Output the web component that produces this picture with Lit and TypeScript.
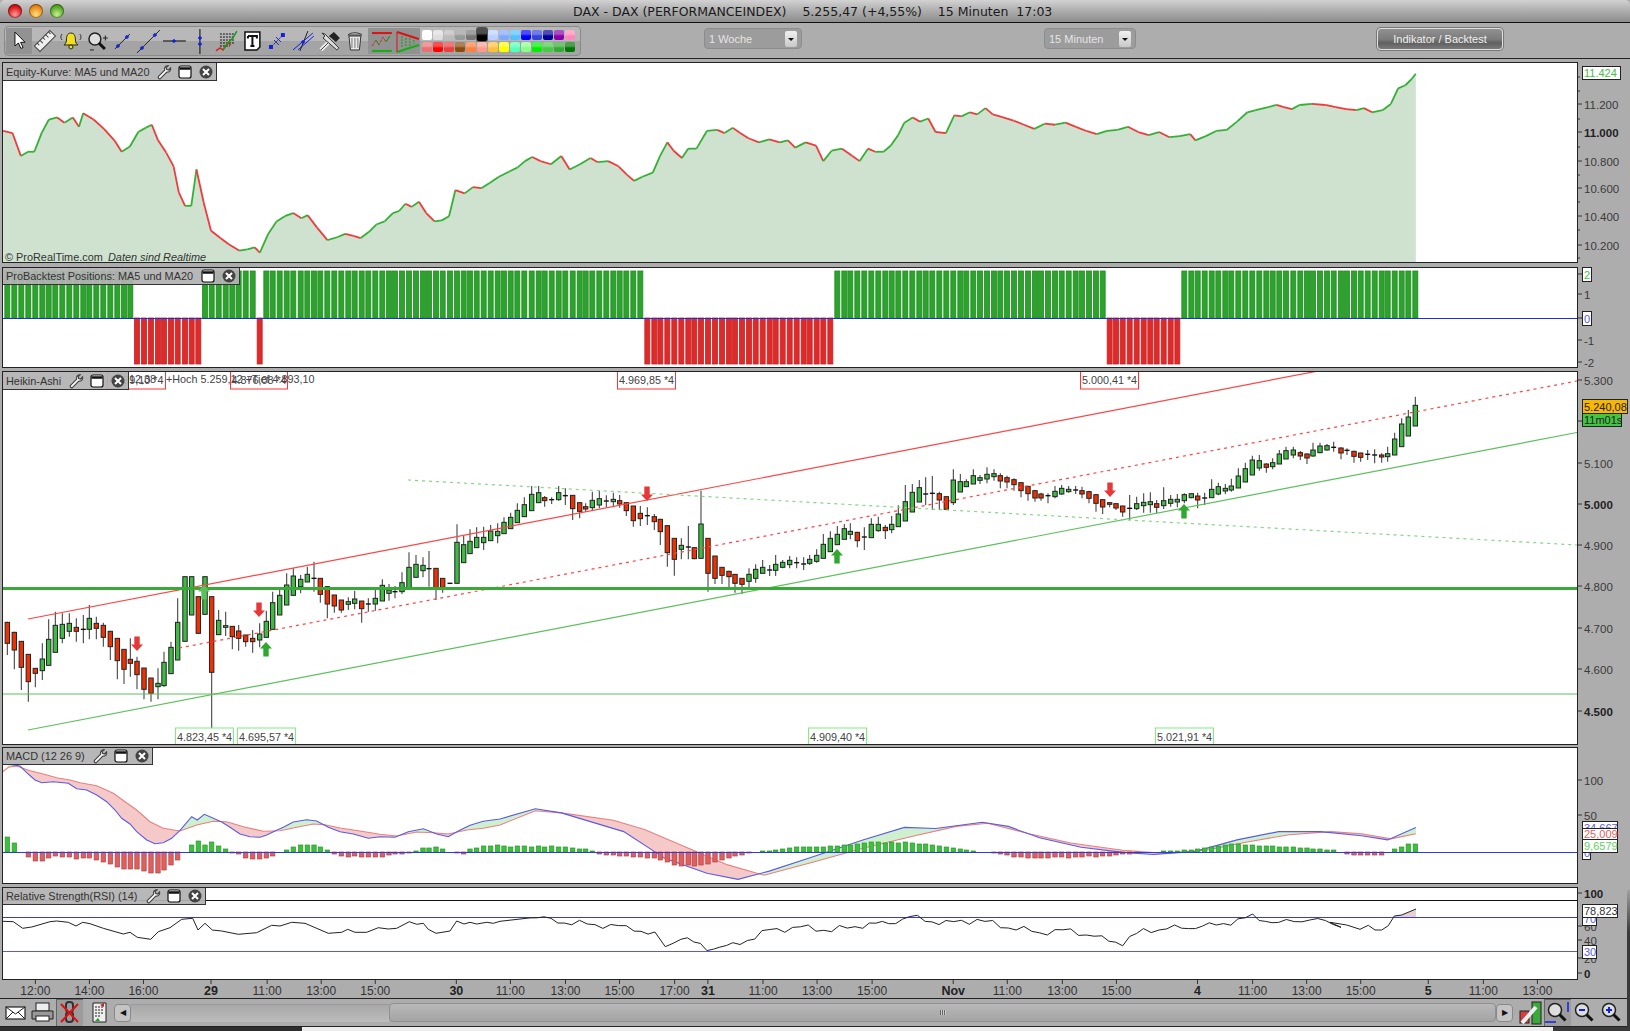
import { LitElement, html, svg, css } from 'lit';
import { customElement } from 'lit/decorators.js';

// the screenshot data was read at two scales, S turns overview coords into page px
const S = 1.0395;
const pts = (s: string) => s.trim().split(/\s+/).map((p) => p.split(',').map(Number));
const zoomed = (ox: number, oy: number, s: string) => pts(s).map(([x, y]) => [ox + x / 3, oy + y / 3]);
const viewed = (s: string) => pts(s).map(([x, y]) => [x * S, y * S]);
const poly = (p: number[][]) => p.map(([x, y]) => `${x.toFixed(1)},${y.toFixed(1)}`).join(' ');

const EQUITY = viewed(`3,126 12,128 20,150 27,146 33,146 40,128 47,115 55,113 62,118 70,113 76,122 80,109 90,115 100,124 110,135 117,146 125,141 133,127 140,123 146,120 152,135 160,147 167,160 172,185 178,198 184,198 189,163 196,195 203,222 212,229 220,235 230,241 238,240 245,238 250,243 258,225 266,213 274,208 282,205 290,210 296,207 305,219 315,231 325,228 332,225 340,227 347,229 355,223 362,216 370,213 378,205 384,203 390,196 396,199 403,194 410,205 418,213 425,212 432,208 438,183 447,186 455,180 463,181 471,176 480,170 490,165 498,161 505,155 512,151 520,155 530,158 540,150 548,163 558,158 568,152 575,156 585,155 595,160 603,168 610,174 618,170 628,166 635,150 642,137 648,145 656,152 662,143 670,143 680,126 690,125 697,128 705,123 712,128 720,133 730,137 740,134 750,137 758,135 765,142 775,137 785,140 792,155 800,145 810,143 820,150 827,155 835,143 842,146 850,146 857,140 864,130 870,118 878,113 885,117 893,114 900,127 910,128 918,111 925,112 933,108 940,110 948,104 955,110 965,113 975,116 985,120 995,124 1005,119 1015,120 1025,118 1035,122 1045,126 1055,129 1065,126 1075,125 1085,122 1095,127 1105,130 1115,127 1125,132 1135,131 1145,129 1150,135 1160,131 1170,126 1180,125 1190,117 1200,108 1208,106 1220,103 1228,101 1235,103 1243,105 1250,101 1262,100 1275,101 1285,103 1295,105 1305,106 1312,104 1320,108 1330,106 1338,100 1345,85 1352,82 1358,76 1362,71`);

// x, wick top, body top, body bottom, wick bottom, colour (in zoom crop coords)
const parseCandles = (ox: number, oy: number, s: string) =>
  s.trim().split(',').map((row) => {
    const c = row.trim().split(/\s+/);
    const [x, wt, bt, bb, wb] = c.slice(0, 5).map(Number);
    return { x: ox + x / 3, wt: oy + wt / 3, bt: oy + bt / 3, bb: oy + bb / 3, wb: oy + wb / 3, c: c[5] };
  });

const CANDLES = [
  ...parseCandles(0, 560, `22 185 187 250 285 r,43 215 217 270 328 r,64 243 244 322 390 r,85 283 283 365 425 r,106 325 325 340 382 r,127 250 297 332 360 g,146 178 238 316 316 g,166 155 196 277 277 g,187 160 193 235 250 g,208 160 190 214 230 g,229 175 202 214 245 r,250 165 208 208 250 d,268 135 175 208 238 g,289 170 190 205 238 r,310 188 196 232 260 r,331 212 214 260 300 r,352 235 235 302 358 r,372 268 268 328 372 r,391 235 298 310 350 r,411 290 304 344 388 r,432 324 324 388 418 r,453 354 354 400 425 r,474 325 370 380 418 g,492 275 307 377 380 g,513 245 262 341 341 g,533 115 187 300 300 g,555 50 50 244 244 g,575 50 50 165 165 g,595 110 110 220 220 r,615 50 50 163 163 g,635 110 110 337 505 r,656 150 181 224 224 g,677 155 197 202 228 g,697 198 199 230 268 r,716 195 213 235 272 r,737 225 225 245 260 r,758 210 235 245 278 r,779 190 222 240 262 g,799 152 184 232 232 g,818 95 128 208 208 g,839 90 106 165 165 g,860 40 75 135 135 g,880 25 48 106 106 g,902 45 58 80 100 g,922 20 43 66 66 g,942 5 55 55 95 d,961 55 55 103 128 r,982 78 80 132 175 r,1003 105 105 138 158 r,1024 120 120 150 158 r,1045 112 125 133 150 g,1064 92 117 130 148 g,1085 123 123 146 188 r,1105 115 132 132 155 d,1126 90 115 132 152 g,1147 58 76 123 123 g,1167 72 90 100 122 g,1185 78 95 95 115 d`),
  ...parseCandles(390, 470, `36 307 338 365 372 g,57 247 292 355 355 g,78 255 283 322 322 g,99 262 286 302 322 g,117 243 296 296 350 d,138 295 295 355 390 r,158 325 325 352 368 r,180 340 340 340 340 d,201 163 217 340 340 g,221 197 224 278 278 g,240 178 214 251 251 g,260 172 202 233 233 g,281 170 202 218 240 g,302 165 183 212 212 g,323 160 184 197 220 g,342 142 157 191 191 g,362 128 142 176 176 g,382 100 121 158 158 g,403 82 104 140 140 g,425 48 73 122 122 g,446 48 68 98 98 g,464 78 83 92 110 r,485 82 89 89 102 d,506 48 68 89 92 g,526 55 77 77 105 d,548 76 76 116 150 r,569 98 98 124 145 r,587 100 110 117 125 r,607 65 91 113 122 g,628 62 86 105 115 g,649 76 93 93 112 d,670 68 88 95 112 g,689 75 92 102 113 r,709 98 98 122 138 r`),
  ...parseCandles(620, 470, `40 108 108 152 170 r,61 108 130 146 168 r,82 112 137 137 165 d,103 132 140 155 180 r,121 146 148 185 225 r,142 165 167 248 290 r,163 205 205 268 317 r,184 205 226 238 268 g,205 168 231 231 268 d,223 232 233 266 268 r,243 62 162 265 265 g,264 205 205 310 365 r,285 258 258 325 342 r,306 292 292 316 342 r,327 302 304 320 360 r,345 312 313 340 368 r,366 325 325 343 372 r,387 295 313 334 360 g,407 283 298 325 338 g,428 270 292 310 310 g,449 285 300 300 318 d,467 255 283 301 318 g,488 270 277 292 295 g,509 258 271 284 295 g,530 262 278 278 295 d,551 262 282 282 300 d,569 255 268 280 285 g,590 238 256 274 278 g,610 192 223 265 265 g,631 184 205 245 245 g,652 168 193 224 224 g,673 162 176 208 208 g,691 160 184 193 208 g,712 185 187 212 232 r,733 172 201 201 240 d,754 145 163 203 203 g,775 140 163 182 185 g,796 165 172 182 207 r,815 138 163 179 190 g,835 106 132 170 170 g`),
  ...parseCandles(900, 450, `16 105 155 213 213 g,37 102 127 186 186 g,58 90 113 156 156 g,77 82 132 132 165 d,97 78 130 130 180 d,118 125 131 150 180 r,139 140 140 178 180 r,160 58 90 158 165 g,181 72 95 126 126 g,199 88 95 110 110 g,220 58 77 102 102 g,240 75 83 91 102 g,261 52 73 87 100 g,282 58 71 80 92 g,301 70 77 93 115 r,321 77 83 96 115 r,342 85 89 104 122 r,363 98 98 122 142 r,384 108 109 131 152 r,405 120 122 144 155 r,423 128 132 144 152 r,444 130 137 137 160 d,465 108 124 140 145 g,485 105 115 132 135 g,506 108 118 125 128 g,527 108 120 120 132 d,546 110 122 132 145 r,567 122 125 145 160 r,588 133 134 160 185 r,608 148 149 171 192 r,629 157 158 163 172 r,648 160 161 174 180 r,668 167 168 186 200 r,689 135 175 175 210 d,710 140 161 176 180 g,731 130 157 167 188 g,751 127 155 164 188 g,770 150 161 172 190 r`),
  ...parseCandles(1160, 390, `11 292 332 347 357 g,32 315 328 340 350 g,52 312 328 336 352 g,73 310 314 332 340 g,94 311 311 323 325 g,113 308 318 330 355 r,134 308 324 324 345 d,155 268 298 323 323 g,175 278 290 312 316 g,196 282 295 303 312 g,214 266 288 300 305 g,235 235 258 294 294 g,256 218 236 276 276 g,277 197 210 255 255 g,298 195 212 234 242 g,319 220 222 232 248 r,338 205 218 230 238 g,358 180 192 222 222 g,378 170 182 207 207 g,400 170 180 195 205 g,421 183 188 198 210 r,441 190 192 204 222 r,459 158 180 198 200 g,480 158 168 188 190 g,501 162 167 180 182 g,521 155 172 172 185 d,543 172 174 189 208 r,561 175 181 181 195 d,582 182 184 199 218 r,602 188 189 202 215 r,623 180 193 193 210 d,644 178 195 195 220 d,665 190 195 201 218 r,683 170 191 200 215 g,704 128 147 195 195 g,725 85 102 170 170 g,745 60 81 138 138 g,766 20 46 108 108 g`),
];

const MACD_BLUE = [
  ...zoomed(0, 750, `8,40 60,48 80,68 105,90 125,98 160,95 205,100 230,116 260,120 290,135 320,155 345,180 365,205 390,222 410,245 440,270 465,281 490,278 515,265 540,241 575,200 592,210 613,193 640,205 665,216 690,232 720,252 750,260 780,262 800,255 825,243 850,232 880,216 920,209 950,213 985,232 1020,245 1060,252 1105,265 1140,260 1185,262 1225,245 1270,236 1310,252 1345,260 1375,243 1410,226 1450,214 1500,207`),
  ...viewed(`515,778 540,782 600,800 640,826 680,840 710,846 740,838 780,825 830,808 870,796 900,797 945,791 970,795 1000,806 1040,815 1080,820 1110,822 1150,819 1190,808 1230,800 1270,800 1310,804 1335,808 1362,796`),
];
const MACD_RED = [
  ...zoomed(0, 750, `8,65 25,52 50,48 90,62 130,72 170,83 210,90 240,98 290,107 340,130 375,155 410,180 450,215 490,235 540,243 590,225 640,214 680,215 730,230 790,244 840,242 890,232 940,222 975,224 1020,234 1080,243 1140,253 1190,258 1250,246 1300,248 1345,252 1400,240 1450,235 1500,225`),
  ...viewed(`515,780 540,782 590,789 620,798 660,815 700,832 735,842 780,830 830,816 880,804 920,795 950,792 990,802 1030,811 1080,818 1120,821 1160,818 1200,810 1240,803 1280,800 1310,802 1338,807 1362,802`),
];
const HIST = [15, 9, 0, -5, -9, -9, -6, -4, -5, -5, -7, -6, -6, -8, -10, -12, -15, -17, -17, -19, -21, -21, -18, -13, -8, 0, 7, 11, 7, 10, 6, 3, -1, -2, -6, -7, -7, -6, -4, 0, 2, 5, 7, 7, 7, 5, 2, -2, -4, -5, -4, -5, -5, -5, -3, -2, -2, -1, 1, 4, 4, 5, 3, 0, -1, -2, 3, 4, 6, 6, 7, 6, 5, 6, 6,
  5, 6, 5, 6, 5, 5, 4, 3, 1, -2, -3, -3, -4, -4, -5, -5, -6, -6, -8, -10, -13, -14, -13, -14, -13, -12, -10, -8, -6, -4, -3, -1, 0, 1, 1, 2, 3, 4, 5, 5, 5, 5, 6, 6, 7, 7, 8, 9, 10, 10, 9, 10, 9, 10, 9, 8, 8, 7, 6, 5, 4, 3, 2, 1, 0, 0, -1, -2, -3, -5, -5, -6, -6, -6, -5, -5, -6, -5, -5, -4, -5, -4, -4, -3, -2, -2, -1, 0, 0, 0, 1, 1, 1, 2, 2, 3, 4, 5, 6, 7, 8, 8, 7, 7, 6, 6, 5, 5, 5, 4, 4, 3, 3, 2, 2, 0, -2, -3, -3, -3, -3, -3, 0, 3, 5, 8];
const histAt = (x: number) => HIST[Math.min(HIST.length - 1, Math.round((x - 7.6) / 7.01))];

// the middle of the rsi line was only read roughly, give it the small ripple of the original
const ripple = (p: number[][]) => p.map(([x, y]) => [x, y + 2.2 * Math.sin(x * 0.17) + 1.4 * Math.sin(x * 0.41)]);
const densify = (p: number[][], step: number) => {
  const out: number[][] = [];
  for (let i = 1; i < p.length; i++) {
    const n = Math.max(1, Math.round((p[i][0] - p[i - 1][0]) / step));
    for (let k = 0; k < n; k++) {
      const t = k / n;
      out.push([p[i - 1][0] + t * (p[i][0] - p[i - 1][0]), p[i - 1][1] + t * (p[i][1] - p[i - 1][1])]);
    }
  }
  out.push(p[p.length - 1]);
  return out;
};

const RSI = [
  ...zoomed(0, 880, `8,124 40,125 68,145 95,141 150,125 170,123 205,127 228,138 248,127 270,131 310,145 370,162 390,157 412,172 452,178 475,155 510,143 545,118 578,115 594,150 615,130 637,150 665,153 715,163 770,158 815,136 840,138 875,127 915,130 985,160 1025,157 1043,148 1065,157 1100,157 1135,143 1165,147 1190,145 1228,125 1250,133 1270,130 1285,148 1308,160 1350,153 1370,123 1392,132 1410,127 1430,132 1460,127 1480,130 1500,124`),
  ...ripple(densify(viewed(`510,882 530,885 550,888 580,890 610,893 630,900 640,910 655,902 680,912 705,910 740,895 770,892 800,895 830,890 855,888 875,882 890,885 910,888 940,885 970,892 1000,897 1030,895 1060,903 1080,907 1100,895 1130,893 1170,890 1205,882 1230,888 1260,884 1290,890`), 7)),
  ...zoomed(1330, 780, `0,427 50,435 90,448 115,436 135,450 155,450 175,437 193,408 215,405 258,387`),
];

const TIMES: [number, string, boolean][] = [
  [34, '12:00', false], [86, '14:00', false], [138, '16:00', false], [203, '29', true], [257, '11:00', false], [309, '13:00', false], [361, '15:00', false], [439, '30', true], [491, '11:00', false], [544, '13:00', false], [596, '15:00', false], [649, '17:00', false], [681, '31', true], [734, '11:00', false], [786, '13:00', false], [839, '15:00', false], [917, 'Nov', true], [969, '11:00', false], [1022, '13:00', false], [1074, '15:00', false], [1152, '4', true], [1205, '11:00', false], [1257, '13:00', false], [1309, '15:00', false], [1374, '5', true], [1427, '11:00', false], [1479, '13:00', false],
];

const PALETTE = ['#ffffff', '#dddddd', '#bbbbbb', '#999999', '#777777', '#000000', '#bcd0ff', '#7fa8ff', '#55c0ff', '#0000ff', '#3344dd', '#000099', '#8800aa', '#ff88bb',
  '#e87070', '#ff0000', '#e84040', '#8b4a10', '#ff8040', '#ff9a8a', '#ffc040', '#ffff00', '#55ffbb', '#88ff88', '#00ee00', '#44cc44', '#33aa33', '#007700'];

const interp = (p: number[][], x: number) => {
  for (let i = 1; i < p.length; i++) {
    if (x <= p[i][0]) {
      const t = (x - p[i - 1][0]) / (p[i][0] - p[i - 1][0]);
      return p[i - 1][1] + t * (p[i][1] - p[i - 1][1]);
    }
  }
  return p[p.length - 1][1];
};

const blueCross = (x: number, y: number) => svg`<path d="M${x - 2} ${y}h4M${x} ${y - 2}v4" stroke="#1020e0" stroke-width="1.4"/>`;

const TOOL_ICONS = [
  svg`<path d="M9 4v14l3.5-3 2.5 5.5 2.2-1-2.5-5.2h4.5z" fill="#fff" stroke="#111"/>`,
  svg`<g transform="rotate(-45 13 13)"><rect x="2" y="9" width="22" height="8" fill="#eee" stroke="#444"/><path d="M6 9v3M10 9v4M14 9v3M18 9v4M22 9v3" stroke="#444"/></g>`,
  svg`<path d="M13 5c-4 0-4.500 4-4.500 7 0 3-1.500 4-2.500 5h14c-1-1-2.500-2-2.500-5 0-3-.5-7-4.500-7z" fill="#f2e020" stroke="#222"/><circle cx="13" cy="19" r="2" fill="#f2e020" stroke="#222"/><path d="M4 6c-1.500 2-1.500 4 0 6M22 6c1.500 2 1.500 4 0 6" fill="none" stroke="#333"/>`,
  svg`<circle cx="11" cy="11" r="6" fill="#ddd" stroke="#222" stroke-width="1.500"/><path d="M15 15l6 6" stroke="#111" stroke-width="3"/><path d="M19 10h5M21.500 7.500v5M6 22h4" stroke="#222"/>`,
  svg`<path d="M6 21L21 6" stroke="#222"/>${blueCross(9, 18)}${blueCross(18, 9)}`,
  svg`<path d="M2 25L25 2" stroke="#222"/>${blueCross(7, 20)}${blueCross(20, 7)}`,
  svg`<path d="M2 13h23" stroke="#222" stroke-width="1.200"/>${blueCross(13, 13)}`,
  svg`<path d="M13 1v25" stroke="#222" stroke-width="1.200"/>${blueCross(13, 10)}${blueCross(13, 16)}`,
  svg`<path d="M7 6h14M7 9h14M7 12h14M7 15h14M7 18h10" stroke="#111" stroke-dasharray="2 1"/><path d="M3 23l4-3 3 2 5-7 3 2" fill="none" stroke="#e02020" stroke-width="1.500"/><path d="M10 22l4-6 6-6 4-7" fill="none" stroke="#10a010" stroke-width="1.500"/>`,
  svg`<path d="M6 4h15v15l-3 3H6z" fill="#fff" stroke="#111" stroke-width="1.500"/><path d="M9 8h9v2.500M9 8v2.500M13.500 8v10M11.500 18h4" fill="none" stroke="#111" stroke-width="2"/>`,
  svg`<path d="M8 18l10-10" stroke="#222" stroke-dasharray="2 1"/><rect x="5" y="17" width="4" height="4" fill="#1020e0"/><rect x="17" y="5" width="4" height="4" fill="#1020e0"/><path d="M10 12l5 5M12 9l5 5" stroke="#1020e0"/>`,
  svg`<path d="M3 22L23 5" stroke="#1020e0"/><path d="M8 22L24 8" stroke="#1020e0"/><path d="M18 3L10 23" stroke="#222"/>${blueCross(13, 14)}`,
  svg`<path d="M5 22l10-10" stroke="#eee" stroke-width="4"/><path d="M5 22l10-10" stroke="#333" stroke-width="1" fill="none"/><path d="M6 5l3 3-2 2 14 12 2-2L9 6z" fill="#ddd" stroke="#333"/><path d="M13 8l5-4 6 6-4 4z" fill="#222"/>`,
  svg`<path d="M7 8h12l-1.500 14h-9z" fill="#e8e8e8" stroke="#333"/><path d="M6 7c2-3 12-3 14 0z" fill="#ccc" stroke="#333"/><path d="M10 10v10M13 10v10M16 10v10" stroke="#777"/>`,
  svg`<path d="M4 5h20" stroke="#e01010" stroke-width="2"/><path d="M4 23h20" stroke="#10b010" stroke-width="2"/><path d="M4 18l4-6 3 5 4-8 3 5 4-6" fill="none" stroke="#c03030" stroke-dasharray="3 1"/><path d="M8 12l3 5M18 14l4-6" stroke="#10a010"/>`,
  svg`<path d="M3 4l22 7" stroke="#e01010" stroke-width="2"/><path d="M3 24l22-7" stroke="#10b010" stroke-width="2"/><path d="M3 4v20" stroke="#e01010"/><path d="M8 8v12M12 10v8M16 10v8M20 12v4" stroke="#10a010" stroke-dasharray="2 1"/>`,
];

const wrench = html`<svg class="li" viewBox="0 0 16 16"><path d="M12 1.500a3.500 3.500 0 0 0-3.300 4.600L2.500 12.300a1.500 1.500 0 0 0 2.100 2.100l6.200-6.200A3.500 3.500 0 0 0 14.600 4l-2.100 2-1.800-.5-.5-1.800 2-2.100z" fill="#fff" stroke="#444" stroke-width="1.200"/></svg>`;
const windowIcon = html`<svg class="li" viewBox="0 0 16 16"><rect x="2" y="2" width="12" height="12" rx="2" fill="#fff" stroke="#111" stroke-width="1.200"/><path d="M2.500 4.500h11" stroke="#111" stroke-width="2.500"/></svg>`;
const closeIcon = html`<svg class="li" viewBox="0 0 16 16"><circle cx="8" cy="8" r="6.500" fill="#444"/><path d="M5 5l6 6M11 5l-6 6" stroke="#fff" stroke-width="2"/></svg>`;

const arrow = (x: number, y: number, up: boolean, fill: string) => {
  const d = up
    ? `M${x} ${y}l6 6.500h-3.300v8h-5.400v-8h-3.300z`
    : `M${x} ${y}l6 -6.500h-3.300v-8h-5.400v8h-3.300z`;
  return svg`<path d=${d} fill=${fill}/>`;
};

const boxLabel = (x: number, y: number, w: number, text: string, color: string, anchor = 'middle') => svg`
  <rect x=${x} y=${y} width=${w} height="18" fill="none" stroke=${color}/>
  <text x=${anchor === 'middle' ? x + w / 2 : x + w - 2} y=${y + 13} text-anchor=${anchor} class="mini">${text}</text>`;

@customElement('app-root')
export class AppRoot extends LitElement {
  static styles = css`
    :host {
      display: block;
      position: relative;
      width: 1630px;
      height: 1031px;
      overflow: hidden;
      background: #b8b8b8;
      font-family: "Liberation Sans", Arial, sans-serif;
    }
    svg text {
      font-family: "Liberation Sans", Arial, sans-serif;
    }
    .window {
      display: flex;
      flex-direction: column;
      height: 1031px;
      background: #adadad;
    }
    .titlebar {
      height: 22px;
      flex: none;
      display: flex;
      align-items: center;
      padding-left: 8px;
      position: relative;
      border-bottom: 1px solid #111;
      border-radius: 5px 5px 0 0;
      background: linear-gradient(#d2d2d2, #b4b4b4 40%, #8c8c8c);
    }
    .lights {
      display: flex;
      gap: 7px;
    }
    .light {
      width: 14px;
      height: 14px;
      border-radius: 50%;
      box-shadow: inset 0 0 0 1px rgba(0, 0, 0, 0.35);
    }
    .light.red { background: radial-gradient(circle at 50% 75%, #ff9a9a, #d81818 60%, #8a1010); }
    .light.amber { background: radial-gradient(circle at 50% 75%, #ffe080, #e88a18 60%, #a05a10); }
    .light.green { background: radial-gradient(circle at 50% 75%, #c8f090, #58a828 60%, #387818); }
    .title {
      margin-left: 509px;
      font-family: "DejaVu Sans", sans-serif;
      font-size: 12.5px;
      color: #1a1a1a;
      white-space: pre;
    }
    .toolbar {
      height: 35px;
      flex: none;
      display: flex;
      align-items: center;
      padding: 0 0 0 4px;
      border-bottom: 1px solid #222;
      background: #adadad;
    }
    .tools {
      display: flex;
      align-items: center;
      width: 577px;
      height: 30px;
      box-sizing: border-box;
      padding-left: 1px;
      border: 1px solid #8a8a8a;
      border-radius: 4px;
      background: linear-gradient(#b8b8b8 50%, #a4a4a4 50%);
    }
    .tool {
      width: 25.85px;
      height: 26px;
      flex: none;
    }
    .tool.on {
      background: #929292;
    }
    .palette {
      display: grid;
      grid-template-columns: repeat(14, 11px);
      grid-auto-rows: 10px;
      row-gap: 2px;
      margin-left: 2px;
    }
    .swatch {
      width: 10.5px;
      height: 10px;
      border-radius: 2px;
      background-image: linear-gradient(rgba(255, 255, 255, 0.3) 40%, rgba(255, 255, 255, 0) 60%);
    }
    .swatch.raised {
      height: 13px;
      margin-top: -2px;
      box-shadow: 0 0 0 1px #555;
    }
    .select {
      display: flex;
      align-items: center;
      justify-content: space-between;
      box-sizing: border-box;
      height: 21px;
      margin-top: -4px;
      padding: 0 4px 0 4px;
      border: 1px solid #8c8c8c;
      border-radius: 4px;
      background: #9c9c9c;
      color: #e4e4e4;
      font-size: 11px;
    }
    .select.week {
      width: 98px;
      margin-left: 123px;
    }
    .select.mins {
      width: 92px;
      margin-left: 242px;
    }
    .select i {
      display: block;
      width: 12px;
      height: 16px;
      border-radius: 2px;
      background: linear-gradient(#f0f0f0, #c8c8c8);
      position: relative;
    }
    .select i::after {
      content: "";
      position: absolute;
      left: 3px;
      top: 7px;
      border: 3px solid transparent;
      border-top: 3px solid #111;
      border-bottom: 0;
    }
    .backtest {
      width: 126px;
      height: 22px;
      box-sizing: border-box;
      margin-left: 241px;
      margin-top: -4px;
      border: 1px solid #e0e0e0;
      border-radius: 4px;
      box-shadow: 0 0 0 1px #777;
      background: linear-gradient(#909090, #7c7c7c 50%, #606060 70%, #7a7a7a);
      color: #efefef;
      font-size: 11px;
      line-height: 20px;
      text-align: center;
    }
    .charts {
      flex: none;
      padding-top: 3px;
    }
    .row {
      display: flex;
      padding-left: 2px;
    }
    .plot {
      position: relative;
      box-sizing: border-box;
      width: 1576px;
      flex: none;
      border: 1px solid #222;
      background: #fff;
      overflow: hidden;
    }
    .plot > svg {
      display: block;
      width: 100%;
      height: 100%;
    }
    .axis {
      display: block;
      width: 52px;
      flex: none;
      overflow: visible;
    }
    .axis text {
      font-size: 11.5px;
      fill: #3a3a3a;
    }
    .axis text.b {
      font-weight: bold;
      fill: #222;
    }
    .axis text.val {
      font-size: 11px;
    }
    .mini {
      font-size: 10.8px;
      fill: #444;
    }
    .copy {
      font-size: 10.9px;
      fill: #333;
    }
    .copy.it {
      font-style: italic;
    }
    .lab {
      position: absolute;
      left: 0;
      top: 0;
      display: flex;
      align-items: center;
      justify-content: space-between;
      box-sizing: border-box;
      padding: 0 2px 0 3px;
      border-right: 1px solid #333;
      border-bottom: 1px solid #333;
      background: rgba(178, 178, 178, 0.93);
      color: #333;
      font-size: 10.9px;
      white-space: nowrap;
    }
    .lab .icons {
      display: flex;
      gap: 5px;
    }
    .li {
      display: block;
      width: 16px;
      height: 16px;
    }
    .timeaxis {
      display: block;
      width: 1630px;
      height: 18px;
      flex: none;
    }
    .timeaxis text {
      font-size: 12px;
      fill: #333;
      text-anchor: middle;
    }
    .timeaxis text.b {
      font-weight: bold;
      font-size: 12.5px;
      fill: #222;
    }
    .bottom {
      flex: none;
      box-sizing: border-box;
      height: 29px;
      display: flex;
      align-items: center;
      padding: 0 4px 0 2px;
      border-top: 1px solid #222;
      border-bottom: 1px solid #222;
      background: #adadad;
    }
    .bt {
      width: 27px;
      height: 27px;
      flex: none;
    }
    .bt.doc {
      margin-left: 3px;
    }
    .bt.on {
      background: #9c9c9c;
      box-shadow: inset 1px 1px 0 #666;
    }
    .scroll {
      display: flex;
      align-items: center;
      width: 1399px;
      height: 19px;
      flex: none;
      margin-left: 1px;
      margin-right: 4px;
    }
    .sbtn {
      display: flex;
      align-items: center;
      justify-content: center;
      width: 15px;
      height: 16px;
      flex: none;
      border: 1px solid #888;
      border-radius: 4px;
      background: #c4c4c4;
      font-size: 8px;
      color: #111;
    }
    .strack {
      width: 258px;
      height: 17px;
      flex: none;
      background: linear-gradient(#a8a8a8, #bcbcbc);
      border-top: 1px solid #999;
    }
    .sthumb {
      flex: 1;
      height: 17px;
      border: 1px solid #909090;
      border-radius: 4px;
      background: linear-gradient(#b8b8b8, #a4a4a4);
      display: flex;
      align-items: center;
      justify-content: center;
    }
    .sthumb::after {
      content: "";
      width: 6px;
      height: 5px;
      background: repeating-linear-gradient(90deg, #666 0 1px, #ccc 1px 2px);
    }
    .desktop {
      flex: none;
      height: 4px;
      display: flex;
    }
    .desktop .dark { width: 302px; background: #2e2e2e; }
    .desktop .page { flex: 1; background: #eeeeee; }
    .desktop .dark2 { width: 77px; background: #3a3a3a; }
    .edge {
      position: absolute;
      right: 0;
      top: 890px;
      width: 3px;
      bottom: 0;
      background: linear-gradient(#a0a0a0, #3a3a3a 30%);
    }
  `;

  private label(text: string, w: number, h: number, wrenchToo = true) {
    return html`<div class="lab" style="width:${w}px;height:${h}px">
      <span>${text}</span>
      <span class="icons">${wrenchToo ? wrench : ''}${windowIcon}${closeIcon}</span>
    </div>`;
  }

  // chart svg in page coordinates, so the data can stay as read from the picture
  private chart(top: number, h: number, gap: number, lab: unknown, body: unknown, axis: unknown) {
    return html`<div class="row" style="height:${h}px;margin-bottom:${gap}px">
      <div class="plot">
        <svg viewBox="3 ${top + 1} 1574 ${h - 2}" preserveAspectRatio="none">${body}</svg>
        ${lab}
      </div>
      <svg class="axis" viewBox="1578 ${top} 52 ${h}" style="height:${h}px">${axis}</svg>
    </div>`;
  }

  private axisLabels(rows: [number, string, boolean?][]) {
    return rows.map(([y, t, b]) => svg`
      <path d="M1577 ${y}h5" stroke="#333"/>
      <text x="1584" y=${y + 4.5} class=${b ? 'b' : ''}>${t}</text>`);
  }

  private valueBox(x: number, y: number, w: number, h: number, text: string, color: string, fill = '#fff') {
    return svg`<rect x=${x + 0.5} y=${y + 0.5} width=${w} height=${h} fill=${fill} stroke="#222"/>
      <text x=${x + 2} y=${y + h / 2 + 4.5} class="val" style="fill:${color}">${text}</text>`;
  }

  private equity() {
    const last = EQUITY[EQUITY.length - 1];
    const area = `${EQUITY[0][0]},263 ${poly(EQUITY)} ${last[0]},263`;
    return svg`
      <polygon points=${area} fill="#cfe2cf"/>
      ${EQUITY.slice(1).map((p, i) => svg`<line x1=${EQUITY[i][0]} y1=${EQUITY[i][1]} x2=${p[0]} y2=${p[1]}
        stroke=${p[1] <= EQUITY[i][1] ? '#35b035' : '#ee3b3b'} stroke-width="1.800"/>`)}
      <text x="5" y="261" class="copy">© ProRealTime.com</text>
      <text x="108" y="261" class="copy it">Daten sind Realtime</text>`;
  }

  private positions() {
    const green = [[3, 132], [202, 255], [264, 643], [835, 1105], [1182, 1418]];
    const red = [[134, 201], [257, 263], [644, 834], [1107, 1180]];
    const bars = CANDLES.map(({ x }) => {
      if (green.some(([a, b]) => x > a && x < b)) {
        return svg`<rect x=${x - 2.5} y="271" width="5" height="47" fill="#2ca32c" stroke="#258a25" stroke-width=".8"/>`;
      }
      if (red.some(([a, b]) => x > a && x < b)) {
        return svg`<rect x=${x - 2.5} y="318" width="5" height="46" fill="#e02a2a" stroke="#c02525" stroke-width=".8"/>`;
      }
      return '';
    });
    return svg`${bars}<path d="M3 318.500H1577" stroke="#1c2fe0" stroke-width="1.200"/>`;
  }

  private heikin() {
    return svg`
      ${CANDLES.map((k) => svg`<path d="M${k.x} ${k.wt}V${k.wb}" stroke="#444" stroke-width="1.100"/>`)}
      ${CANDLES.map((k) => k.c === 'd'
        ? svg`<path d="M${k.x - 2.5} ${k.bt}h5" stroke="#111" stroke-width="1.400"/>`
        : svg`<rect x=${k.x - 2.2} y=${k.bt} width="4.400" height=${k.bb - k.bt}
            fill=${k.c === 'g' ? '#3dbb42' : '#f03000'} stroke="#222" stroke-width="1"/>`)}
      <path d="M3 694H1577" stroke="#5cc05c"/>
      <path d="M28 730L1577 432.500" stroke="#5cc05c" stroke-width="1.200"/>
      <path d="M28 619L1318 371" stroke="#f44" stroke-width="1.200"/>
      <path d="M179 648L1577 381" stroke="#f44" stroke-width="1.200" stroke-dasharray="3 4"/>
      <path d="M408 480L1577 545" stroke="#86d486" stroke-width="1.200" stroke-dasharray="3 4"/>
      <path d="M3 588.500H1577" stroke="#37aa37" stroke-width="3"/>
      ${arrow(137, 651, false, '#e63838')}${arrow(259, 617, false, '#e63838')}${arrow(647, 501, false, '#e63838')}${arrow(1110, 497, false, '#e63838')}
      ${arrow(266, 642, true, '#2fa82f')}${arrow(204, 585, true, '#5cc05c')}${arrow(837, 549, true, '#2fa82f')}${arrow(1184, 504, true, '#2fa82f')}
      <text x="129" y="383" class="mini">12,38</text>
      <text x="166" y="383" class="mini">+Hoch 5.259,12 +Tief 4.893,10</text>
      ${boxLabel(107.500, 371, 58, '4.739,10 *4', '#f33', 'end')}
      ${boxLabel(230.500, 371, 57, '4.876,08 *4', '#f33')}
      ${boxLabel(617.500, 371, 58, '4.969,85 *4', '#f33')}
      ${boxLabel(1080.500, 371, 58, '5.000,41 *4', '#f33')}
      ${boxLabel(175.500, 728, 58, '4.823,45 *4', '#7cf07c')}
      ${boxLabel(237.500, 728, 58, '4.695,57 *4', '#7cf07c')}
      ${boxLabel(808.500, 728, 58, '4.909,40 *4', '#7cf07c')}
      ${boxLabel(1155.500, 728, 58, '5.021,91 *4', '#7cf07c')}`;
  }

  private macd() {
    const quads = [];
    for (let x = 8; x < 1416; x += 2) {
      const b0 = interp(MACD_BLUE, x), r0 = interp(MACD_RED, x);
      const b1 = interp(MACD_BLUE, x + 2), r1 = interp(MACD_RED, x + 2);
      quads.push(svg`<polygon points="${x},${b0} ${x + 2},${b1} ${x + 2},${r1} ${x},${r0}"
        fill=${r0 + r1 < b0 + b1 ? '#f6c9c9' : '#cff0cf'}/>`);
    }
    return svg`
      ${quads}
      <polyline points=${poly(MACD_RED)} fill="none" stroke="#e88080" stroke-width="1.100"/>
      <polyline points=${poly(MACD_BLUE)} fill="none" stroke="#5a5ae8" stroke-width="1.100"/>
      ${CANDLES.map(({ x }) => {
        const v = histAt(x);
        if (!v) return '';
        return svg`<rect x=${x - 2.2} y=${v > 0 ? 852 - v : 852} width="4.400" height=${Math.abs(v)}
          fill=${v > 0 ? '#3fbf3f' : '#dd6060'} stroke=${v > 0 ? '#2a9a2a' : '#b84040'} stroke-width=".7"/>`;
      })}
      <path d="M3 852.500H1577" stroke="#2a3ae0" stroke-width="1.200"/>`;
  }

  private rsi() {
    const end = zoomed(1330, 780, `193,408 215,405 258,387`);
    return svg`
      <polygon points="${poly(end)} ${end[2][0]},917 ${end[0][0]},917" fill="#e8d0d4"/>
      <path d="M3 900.500H1577" stroke="#111"/>
      <path d="M3 917.500H1577" stroke="#3a3ad8"/>
      <path d="M3 951.500H1577" stroke="#5a5ae0"/>
      <polyline points=${poly(RSI)} fill="none" stroke="#222" stroke-width="1"/>`;
  }

  render() {
    return html`
      <div class="window">
        <div class="titlebar">
          <div class="lights">
            <div class="light red"></div>
            <div class="light amber"></div>
            <div class="light green"></div>
          </div>
          <div class="title">DAX - DAX (PERFORMANCEINDEX)    5.255,47 (+4,55%)    15 Minuten  17:03</div>
        </div>

        <div class="toolbar">
          <div class="tools">
            ${TOOL_ICONS.map((icon, i) => html`<svg class="tool ${i === 0 || i === 14 || i === 15 ? 'on' : ''}" viewBox="0 0 26 26">${icon}</svg>`)}
            <div class="palette">
              ${PALETTE.map((c, i) => html`<div class="swatch ${i === 5 ? 'raised' : ''}" style="background-color:${c}"></div>`)}
            </div>
          </div>
          <div class="select week">1 Woche<i></i></div>
          <div class="select mins">15 Minuten<i></i></div>
          <div class="backtest">Indikator / Backtest</div>
        </div>

        <div class="charts">
          ${this.chart(62, 201, 4, this.label('Equity-Kurve: MA5 und MA20', 214, 18), this.equity(), svg`
            ${[77, 91, 119, 147, 175, 202, 230, 258].map((y) => svg`<path d="M1577 ${y}h3" stroke="#333"/>`)}
            ${this.axisLabels([[104, '11.200'], [132, '11.000', true], [161, '10.800'], [188, '10.600'], [216, '10.400'], [245, '10.200']])}
            ${this.valueBox(1582, 66, 38, 13, '11.424', '#45c045')}`)}
          ${this.chart(267, 101, 3, this.label('ProBacktest Positions: MA5 und MA20', 237, 17, false), this.positions(), svg`
            ${this.axisLabels([[294, '1'], [340, '-1'], [362, '-2']])}
            <path d="M1577 274h5M1577 318h5" stroke="#333"/>
            ${this.valueBox(1582, 267, 9, 14, '2', '#45c045')}
            ${this.valueBox(1582, 311, 9, 14, '0', '#5a5ae8')}`)}
          ${this.chart(371, 374, 2, this.label('Heikin-Ashi', 126, 18), this.heikin(), svg`
            ${this.axisLabels([[380, '5.300'], [463, '5.100'], [504, '5.000', true], [545, '4.900'], [586, '4.800'], [628, '4.700'], [669, '4.600'], [711, '4.500', true]])}
            <path d="M1577 421h5" stroke="#333"/>
            ${this.valueBox(1582, 399, 45, 14, '5.240,08', '#222', '#f8b800')}
            ${this.valueBox(1582, 413, 39, 13, '11m01s', '#222', '#44c444')}`)}
          ${this.chart(747, 137, 3, this.label('MACD (12 26 9)', 150, 17), this.macd(), svg`
            ${this.axisLabels([[780, '100'], [815, '50']])}
            ${this.valueBox(1582, 845, 8, 14, '0', '#5a5ae8')}
            ${this.valueBox(1582, 821, 35, 12, '34,667', '#5a5ae8')}
            ${this.valueBox(1582, 828, 35, 11, '25,009', '#e06060')}
            ${this.valueBox(1582, 839, 35, 13, '9,6579', '#60d060')}`)}
          ${this.chart(887, 93, 0, this.label('Relative Strength(RSI) (14)', 203, 17), this.rsi(), svg`
            ${this.axisLabels([[893, '100', true], [926, '60'], [940, '40'], [958, '20'], [973, '0', true]])}
            ${this.valueBox(1582, 911, 14, 14, '70', '#5a5ae8')}
            ${this.valueBox(1582, 904, 35, 13, '78,823', '#333')}
            ${this.valueBox(1582, 945, 14, 13, '30', '#5a5ae8')}`)}
        </div>

        <svg class="timeaxis" viewBox="0 980 1630 18">
          ${TIMES.map(([x, t, b]) => svg`
            <path d="M${x * S} 980v4" stroke="#333"/>
            <text x=${x * S} y="995" class=${b ? 'b' : ''}>${t}</text>`)}
        </svg>

        <div class="bottom">
          <svg class="bt" viewBox="0 0 27 27"><rect x="4" y="8" width="19" height="12" fill="#fff" stroke="#222" stroke-width="1.200"/><path d="M4 8l9.500 7L23 8M4 20l7-7M23 20l-7-7" fill="none" stroke="#222"/></svg>
          <svg class="bt" viewBox="0 0 27 27"><rect x="7" y="4" width="13" height="8" fill="#eee" stroke="#222"/><path d="M3 12h21v8H3z" fill="#999" stroke="#222"/><rect x="7" y="17" width="13" height="5" fill="#fff" stroke="#222"/></svg>
          <svg class="bt on" viewBox="0 0 27 27"><rect x="10" y="3" width="7" height="10" rx="3" fill="none" stroke="#333" stroke-width="2"/><rect x="10" y="13" width="7" height="10" rx="3" fill="none" stroke="#333" stroke-width="2"/><path d="M5 5l17 18M22 5L5 23" stroke="#e01010" stroke-width="2"/></svg>
          <svg class="bt doc" viewBox="0 0 27 27"><path d="M7 4h13v19H7z" fill="#eee" stroke="#222"/><path d="M9 8h9M9 11h9M9 14h9M9 17h5" stroke="#222" stroke-dasharray="2 1"/><path d="M14 6l4-2v4z" fill="#d02020"/><path d="M9 22l3-3 2 3z" fill="#20a020"/></svg>
          <div class="scroll">
            <div class="sbtn">◀</div>
            <div class="strack"></div>
            <div class="sthumb"></div>
            <div class="sbtn">▶</div>
          </div>
          <svg class="bt" viewBox="0 0 27 27"><rect x="15" y="3" width="9" height="22" fill="#3aa83a" stroke="#222"/><rect x="3" y="12" width="9" height="12" fill="#d04040" stroke="#222"/><path d="M5 24L19 8" stroke="#eee" stroke-width="4"/></svg>
          <svg class="bt on" viewBox="0 0 27 27"><circle cx="11" cy="11" r="6.500" fill="#ddd" stroke="#222" stroke-width="1.500"/><path d="M15.500 15.500l6 6" stroke="#111" stroke-width="3"/><path d="M24 3v10M1 23h11" stroke="#1020e0" stroke-width="1.500"/></svg>
          <svg class="bt" viewBox="0 0 27 27"><circle cx="11" cy="11" r="6.500" fill="#ddd" stroke="#222" stroke-width="1.500"/><path d="M15.500 15.500l6 6" stroke="#111" stroke-width="3"/><path d="M8 11h6" stroke="#1020e0" stroke-width="2"/></svg>
          <svg class="bt" viewBox="0 0 27 27"><circle cx="11" cy="11" r="6.500" fill="#ddd" stroke="#222" stroke-width="1.500"/><path d="M15.500 15.500l6 6" stroke="#111" stroke-width="3"/><path d="M8 11h6M11 8v6" stroke="#1020e0" stroke-width="2"/></svg>
        </div>
        <div class="desktop">
          <div class="dark"></div>
          <div class="page"></div>
          <div class="dark2"></div>
        </div>
      </div>
      <div class="edge"></div>
    `;
  }
}

declare global {
  interface HTMLElementTagNameMap {
    'app-root': AppRoot;
  }
}
